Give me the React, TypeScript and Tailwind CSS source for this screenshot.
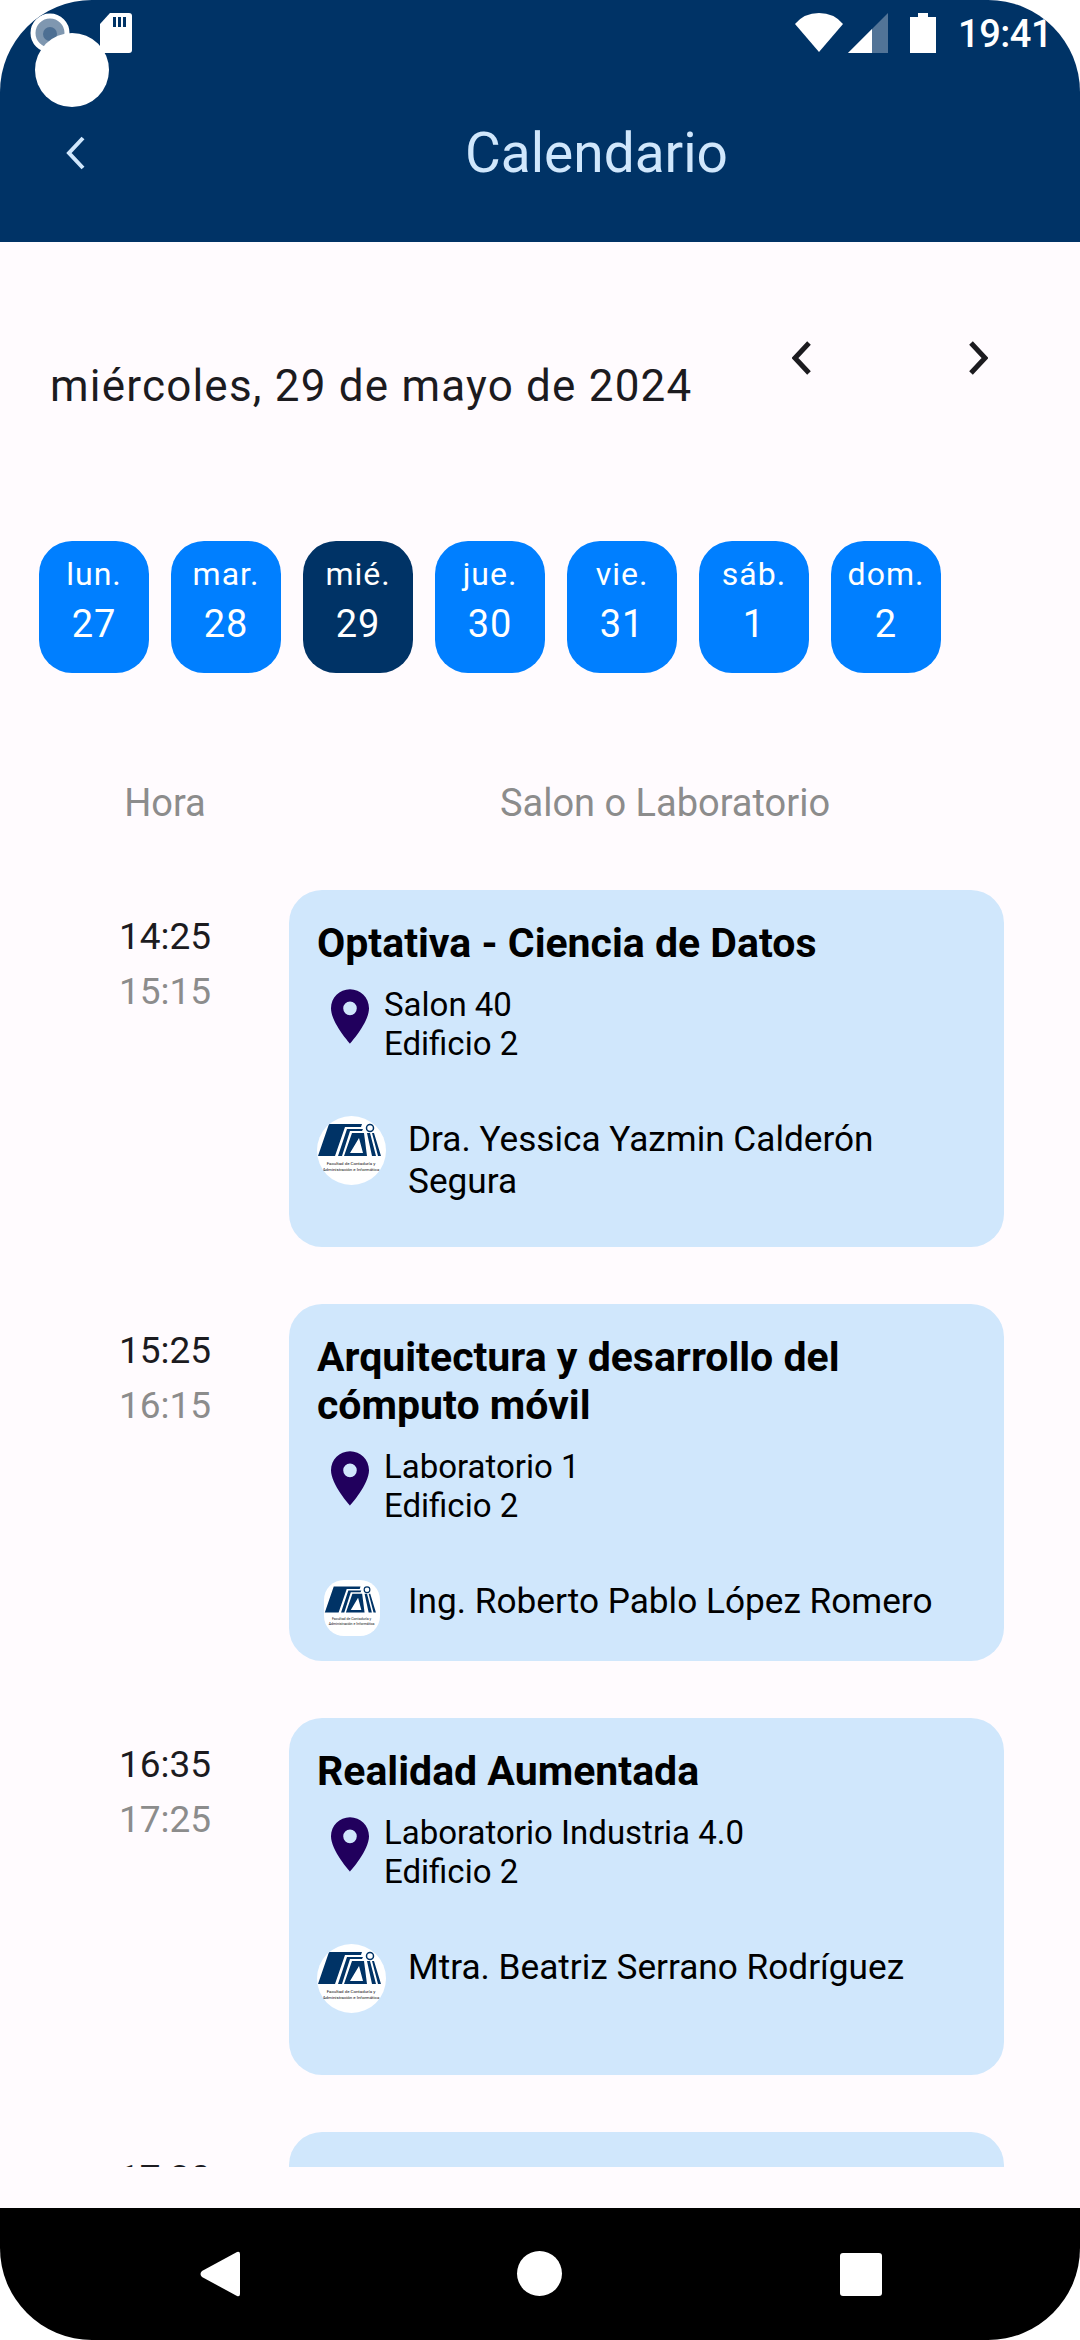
const sans = 'font-["Roboto",sans-serif]';

const days = [
  { name: 'lun.', num: '27' },
  { name: 'mar.', num: '28' },
  { name: 'mié.', num: '29', active: true },
  { name: 'jue.', num: '30' },
  { name: 'vie.', num: '31' },
  { name: 'sáb.', num: '1' },
  { name: 'dom.', num: '2' },
];

const classes = [
  {
    start: '14:25',
    end: '15:15',
    title: 'Optativa - Ciencia de Datos',
    room: 'Salon 40',
    teacher: 'Dra. Yessica Yazmin Calderón Segura',
  },
  {
    start: '15:25',
    end: '16:15',
    title: 'Arquitectura y desarrollo del cómputo móvil',
    room: 'Laboratorio 1',
    teacher: 'Ing. Roberto Pablo López Romero',
    small: true,
  },
  {
    start: '16:35',
    end: '17:25',
    title: 'Realidad Aumentada',
    room: 'Laboratorio Industria 4.0',
    teacher: 'Mtra. Beatriz Serrano Rodríguez',
  },
];

function Logo({ small }: { small?: boolean }) {
  return (
    <svg
      viewBox="0 0 69 69"
      className={small ? 'w-[56px] h-[56px] rounded-[20px] shrink-0' : 'w-[69px] h-[69px] rounded-full shrink-0'}
    >
      <rect width="69" height="69" fill="#fff" />
      <path d="M12 8H45L44 11H28L18 40H1Z" fill="#003366" />
      <path d="M30 13H46L45 15H33L25 40H21Z" fill="#003366" />
      <path d="M35 17H47L50 40H27ZM42 22L33 37H46Z" fill="#003366" fillRule="evenodd" />
      <path d="M39 29L42 25L44 36H36Z" fill="#fff" />
      <path d="M50 17L53 17L59 40H55ZM55 17L57 17L64 40H61Z" fill="#003366" />
      <circle cx="53" cy="12" r="3.5" fill="none" stroke="#003366" strokeWidth="1.5" />
      <text x="34" y="49" textAnchor="middle" fontSize="4.4" fontFamily="Roboto" fill="#111">
        Facultad de Contaduría y
      </text>
      <text x="34" y="55" textAnchor="middle" fontSize="4.4" fontFamily="Roboto" fill="#111">
        Administración e Informática
      </text>
    </svg>
  );
}

function Pin() {
  return (
    <svg viewBox="5 2 14 20" className="w-[38px] h-[55px] shrink-0 mt-[4px]">
      <path
        d="M12 2C8.13 2 5 5.13 5 9c0 5.25 7 13 7 13s7-7.75 7-13c0-3.87-3.13-7-7-7zm0 9.5a2.5 2.5 0 0 1 0-5 2.5 2.5 0 0 1 0 5z"
        fill="#21005d"
      />
    </svg>
  );
}

function Chevron({ dir, color, width, className }: { dir: 'left' | 'right'; color: string; width: number; className: string }) {
  return (
    <svg viewBox="0 0 20 34" className={className}>
      <path
        d={dir === 'left' ? 'M17 2L3 17L17 32' : 'M3 2L17 17L3 32'}
        fill="none"
        stroke={color}
        strokeWidth={width}
      />
    </svg>
  );
}

function StatusBar() {
  return (
    <div className="h-[66px] flex items-start pt-[13px] pl-[30px] pr-[28px]">
      <svg viewBox="0 0 40 40" className="w-[40px] h-[40px]">
        <circle cx="20" cy="20" r="17" fill="#7f97b0" stroke="#fff" strokeWidth="5" />
        <circle cx="20" cy="21" r="7" fill="#4d6f93" />
      </svg>
      <svg viewBox="0 0 32 40" className="w-[32px] h-[40px] ml-[30px]">
        <path d="M10 0H29Q32 0 32 3V37Q32 40 29 40H3Q0 40 0 37V11Z" fill="#fff" />
        <path d="M13 4H16V14H13ZM18 4H21V14H18ZM23 4H26V14H23Z" fill="#003366" />
      </svg>
      <svg viewBox="0 0 50 40" className="w-[50px] h-[40px] ml-auto">
        <path d="M25 39L1 11Q10 0 25 0T49 11Z" fill="#fff" />
      </svg>
      <svg viewBox="0 0 40 40" className="w-[40px] h-[40px] ml-[4px]">
        <path d="M0 40L40 0V40Z" fill="#fff" fillOpacity="0.32" />
        <path d="M0 40L24 16V40Z" fill="#fff" />
      </svg>
      <svg viewBox="0 0 26 40" className="w-[26px] h-[40px] ml-[22px]">
        <path d="M8 0H18V4H26V40H0V4H8Z" fill="#fff" />
      </svg>
      <span className="ml-[22px] mt-[1px] text-[38px] leading-[40px] tracking-[-0.5px] font-medium text-white">19:41</span>
    </div>
  );
}

function ClassRow({ item }: { item: (typeof classes)[number] }) {
  return (
    <div className="flex items-start">
      <div className="w-[119px] shrink-0" />
      <div className="w-[170px] shrink-0 pt-[19px]">
        <div className="text-[37px] leading-[55px] text-[#1c1b1f]">{item.start}</div>
        <div className="text-[37px] leading-[55px] text-[#8c8c8c]">{item.end}</div>
      </div>
      <div className="w-[715px] h-[357px] rounded-[33px] bg-[#d0e7fc] pt-[29px] pl-[28px] pr-[30px] overflow-hidden">
        <div className="text-[41px] leading-[48px] font-bold text-black">{item.title}</div>
        <div className="flex items-start pl-[14px] mt-[18px]">
          <Pin />
          <div className="ml-[15px] text-[33px] leading-[39px] text-black">
            <div>{item.room}</div>
            <div>Edificio 2</div>
          </div>
        </div>
        <div className="flex items-start mt-[55px]">
          <div className={item.small ? 'w-[91px] pl-[7px] shrink-0' : 'w-[91px] -mt-[2px] shrink-0'}>
            <Logo small={item.small} />
          </div>
          <div className="text-[35.2px] leading-[42px] text-black">{item.teacher}</div>
        </div>
      </div>
    </div>
  );
}

export default function App() {
  return (
    <div className={`w-[1080px] h-[2340px] bg-white ${sans}`}>
      <div className="relative w-full h-full rounded-[92px] overflow-hidden bg-[#fffbfe] flex flex-col">
        {/* Header */}
        <div className="h-[242px] bg-[#003366] shrink-0">
          <StatusBar />
          <div className="flex items-center pl-[66px] h-[86px] mt-[44px]">
            <Chevron dir="left" color="#d0e7fc" width={4} className="w-[20px] h-[34px]" />
            <span className="ml-[379px] text-[55px] leading-[60px] text-[#d0e7fc]">Calendario</span>
          </div>
        </div>

        {/* Date */}
        <div className="flex items-start h-[299px] shrink-0 pl-[50px]">
          <span className="mt-[114px] text-[44px] leading-[60px] tracking-[1.2px] text-[#1c1b1f]">
            miércoles, 29 de mayo de 2024
          </span>
          <Chevron dir="left" color="#1c1b1f" width={5} className="absolute left-[792px] top-[341px] w-[20px] h-[34px]" />
          <Chevron dir="right" color="#1c1b1f" width={5} className="absolute left-[968px] top-[341px] w-[20px] h-[34px]" />
        </div>

        {/* Days */}
        <div className="flex gap-[22px] pl-[39px] shrink-0">
          {days.map(d => (
            <div
              key={d.name}
              className={
                d.active
                  ? 'w-[110px] h-[132px] rounded-[33px] bg-[#003366] flex flex-col items-center pt-[11px] text-white'
                  : 'w-[110px] h-[132px] rounded-[33px] bg-[#007fff] flex flex-col items-center pt-[11px] text-white'
              }
            >
              <span className="text-[32px] leading-[44px] tracking-[1px]">{d.name}</span>
              <span className="text-[38px] leading-[46px] tracking-[1px] mt-[5px]">{d.num}</span>
            </div>
          ))}
        </div>

        {/* Column titles */}
        <div className="flex shrink-0 h-[217px] pt-[106px] text-[38px] leading-[48px] text-[#8c8c8c]">
          <div className="w-[330px] text-center">Hora</div>
          <div className="w-[670px] text-center">Salon o Laboratorio</div>
        </div>

        {/* Schedule */}
        <div className="h-[1277px] overflow-hidden flex flex-col gap-[57px] shrink-0">
          {classes.map(c => (
            <ClassRow key={c.start} item={c} />
          ))}
          <div className="flex items-start shrink-0">
            <div className="w-[119px] shrink-0" />
            <div className="w-[170px] shrink-0 pt-[19px] text-[37px] leading-[55px] text-[#1c1b1f]">17:30</div>
            <div className="w-[715px] h-[357px] rounded-[33px] bg-[#d0e7fc]" />
          </div>
        </div>

        <div className="flex-1" />

        {/* Navigation bar */}
        <div className="h-[132px] bg-black shrink-0 flex items-start pt-[43px] pl-[200px]">
          <svg viewBox="0 0 40 46" className="w-[40px] h-[46px]">
            <path d="M37 1Q40 0 40 3V43Q40 46 37 45L2 26Q-1 23 2 20Z" fill="#fff" />
          </svg>
          <div className="w-[45px] h-[45px] rounded-full bg-white ml-[277px]" />
          <div className="w-[42px] h-[43px] rounded-[3px] bg-white ml-[278px] mt-[2px]" />
        </div>

        {/* Overlay circle */}
        <div className="absolute left-[35px] top-[33px] w-[74px] h-[74px] rounded-full bg-white" />
      </div>
    </div>
  );
}
